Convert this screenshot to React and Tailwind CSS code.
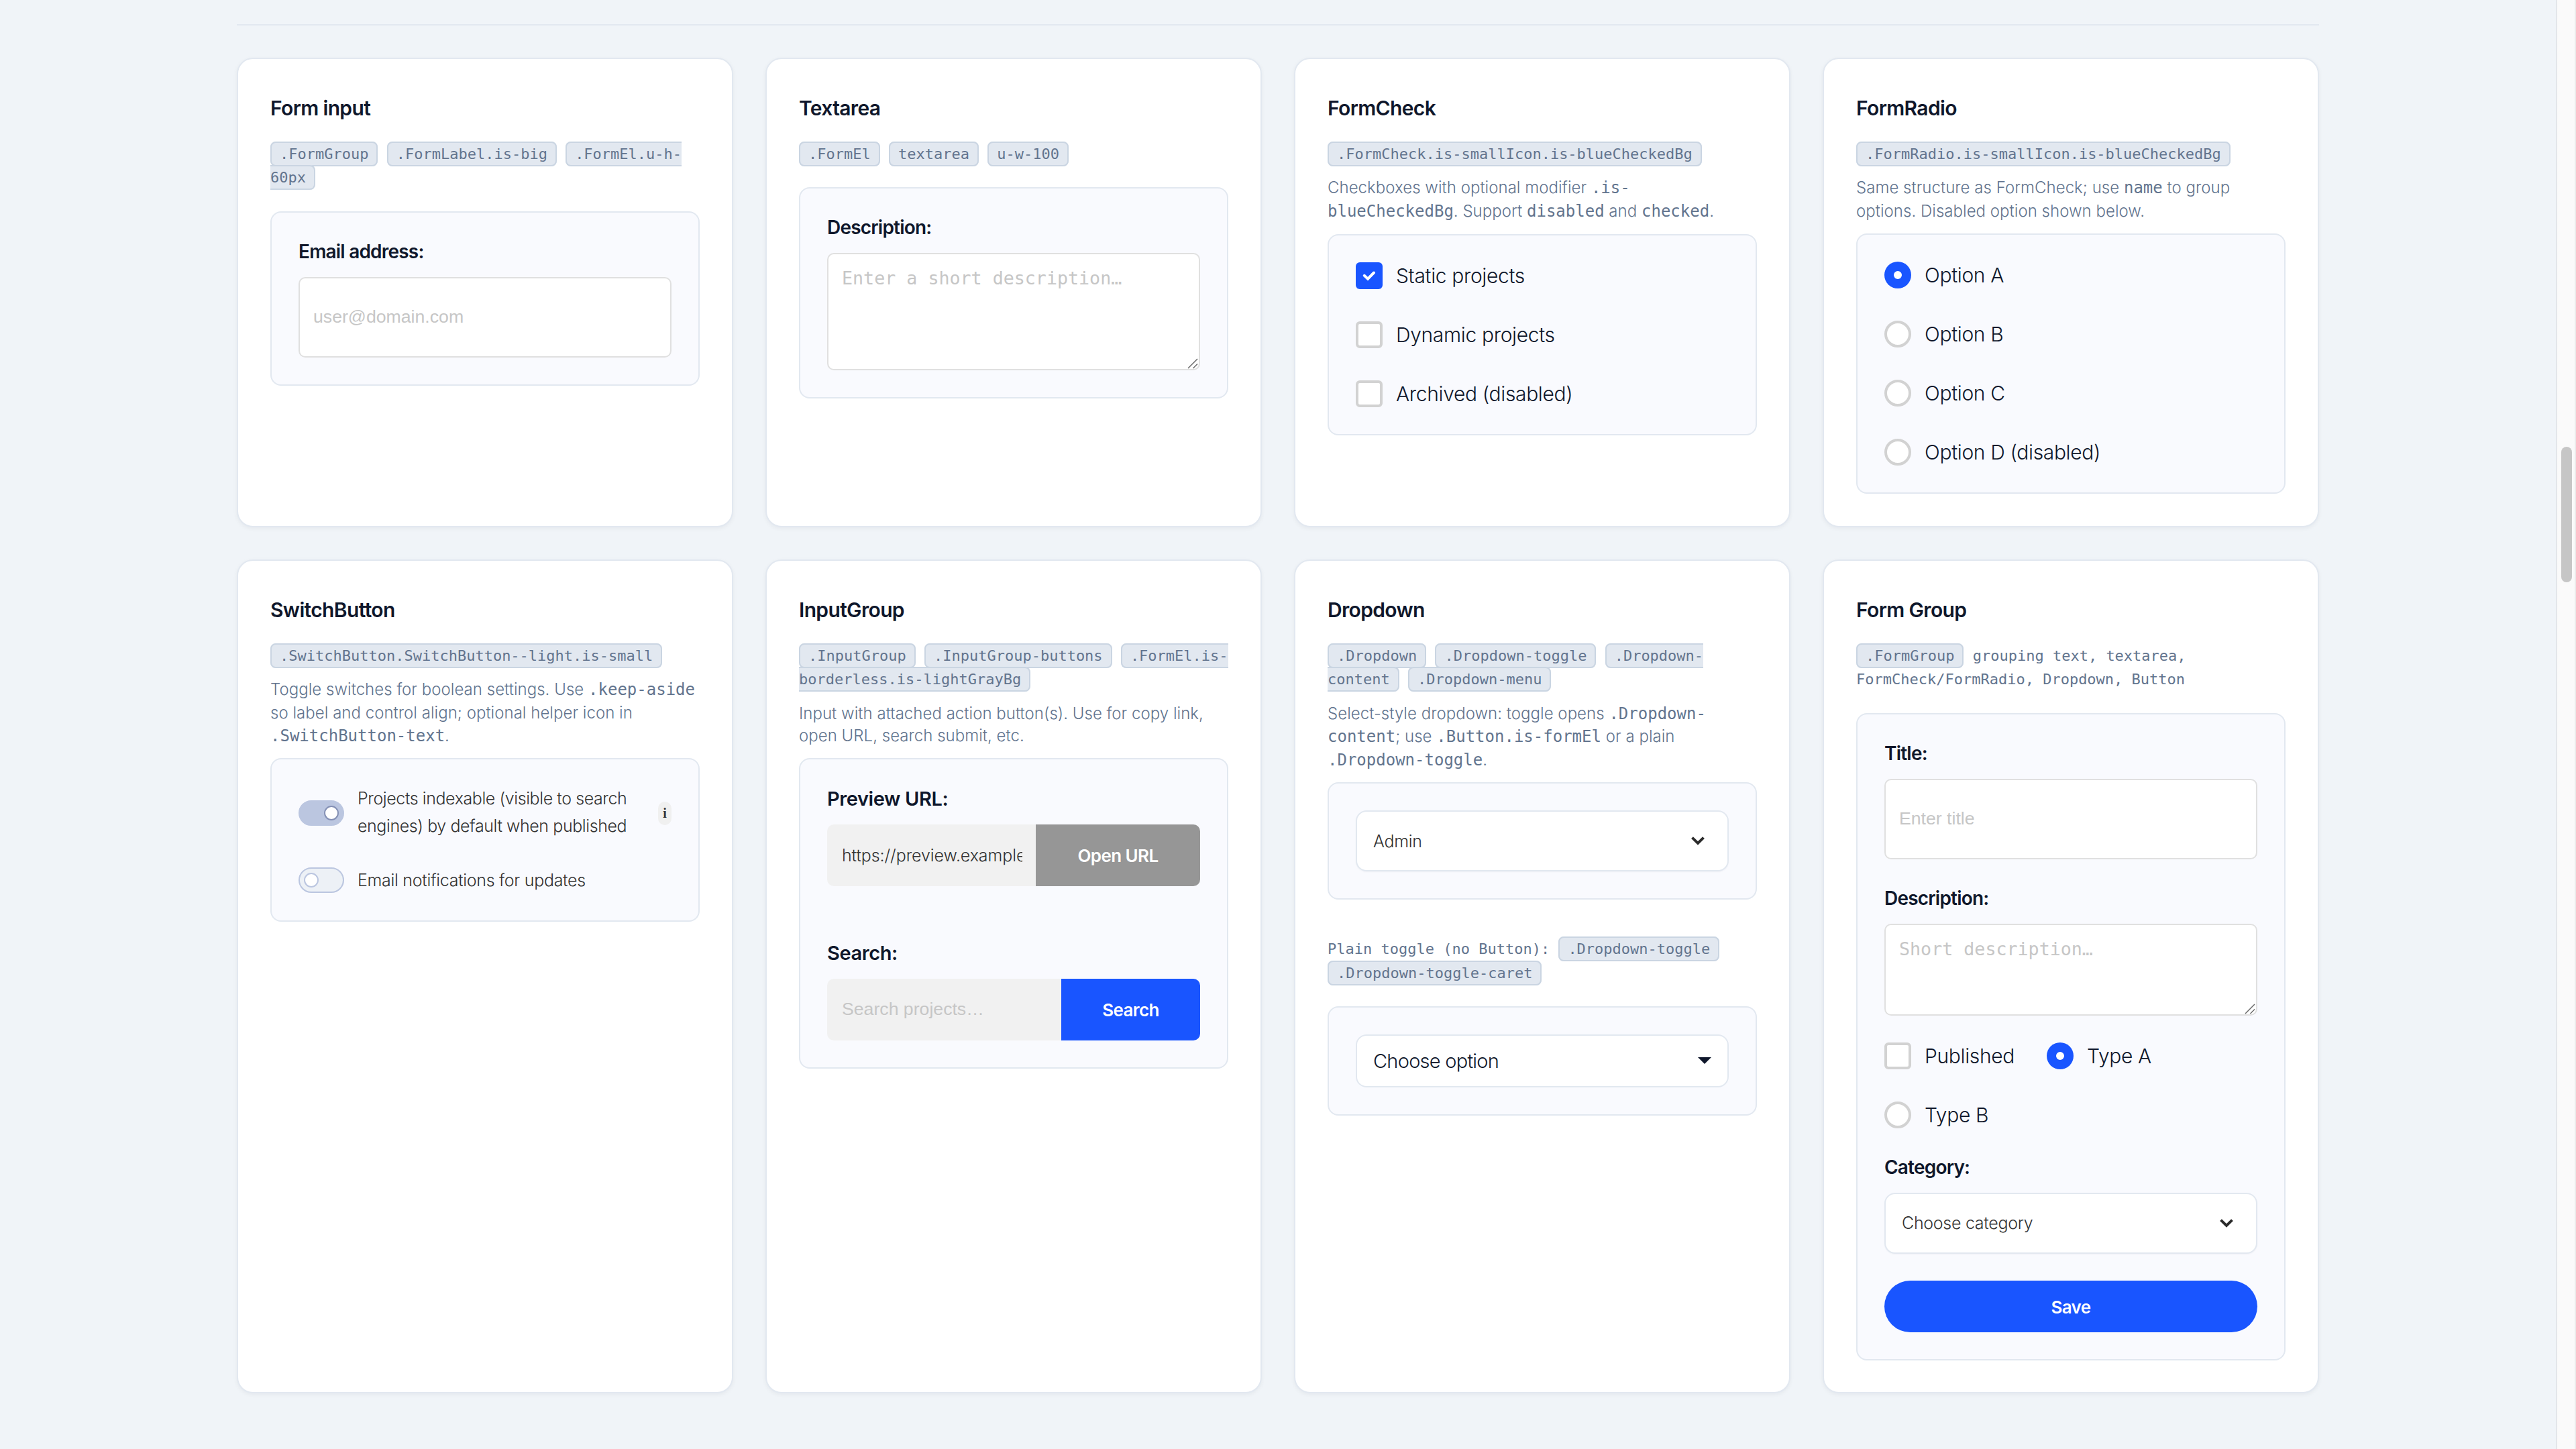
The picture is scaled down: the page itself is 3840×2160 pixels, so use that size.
import React, { useState } from 'react';

const Tag = ({ children }) => (
    <code className="font-['DejaVu_Sans_Mono',monospace] text-[22px] bg-slate-200 border-2 border-slate-300 rounded-lg px-3 py-1">
        {children}
    </code>
);

const Tags = ({ children, className = 'mb-8' }) => (
    <p className={`font-['DejaVu_Sans_Mono',monospace] text-[22px] leading-[35.2px] text-slate-500 ${className}`}>
        {children}
    </p>
);

const Mono = ({ children }) => (
    <code className="font-['DejaVu_Sans_Mono',monospace] text-2xl leading-[34.6px] tracking-normal">{children}</code>
);

const Note = ({ children }) => (
    <p className="text-2xl leading-[33.6px] tracking-[0.03px] font-light text-slate-500 mb-4">{children}</p>
);

const Card = ({ title, children }) => (
    <section className="bg-white border-2 border-slate-200 rounded-3xl p-12 shadow-[0_2px_6px_rgba(15,23,42,0.05)]">
        <h3 className="text-[30px] leading-[48px] tracking-[-0.65px] font-semibold pt-px mb-[27.2px]">{title}</h3>
        {children}
    </section>
);

const Demo = ({ children }) => (
    <div className="bg-[#f9fafe] border-2 border-slate-200 rounded-2xl p-10">{children}</div>
);

const Label = ({ children }) => (
    <label className="block h-14 text-[28px] leading-9 tracking-[-0.8px] font-semibold">{children}</label>
);

const GroupLabel = ({ children }) => (
    <label className="block h-[57px] text-[29px] leading-[38px] tracking-[-0.4px] font-semibold">{children}</label>
);

const TextInput = ({ placeholder }) => (
    <input
        type="text"
        placeholder={placeholder}
        className="block w-full h-[120px] bg-white border-2 border-[#e0e0e0] rounded-[10px] px-5 pb-px font-['Liberation_Sans',sans-serif] text-[26.67px] placeholder:text-[#c6c6c6]"
    />
);

const TextArea = ({ placeholder, height }) => (
    <div className="relative">
        <textarea
            placeholder={placeholder}
            className={`block w-full ${height} bg-white border-2 border-[#e0e0e0] rounded-[10px] p-5 resize-none font-['DejaVu_Sans_Mono',monospace] text-[26.67px] leading-[31px] placeholder:text-[#c6c6c6]`}
        />
        <svg className="absolute right-[3px] bottom-[2px] w-4 h-4" viewBox="0 0 16 16" stroke="#6b6b6b" strokeWidth="1.5">
            <path d="M1 15L15 1M8.5 15L15 8.5" />
        </svg>
    </div>
);

const Check = ({ label, checked }) => (
    <label className="flex items-center gap-5 h-10">
        {checked ? (
            <span className="w-10 h-10 rounded-md bg-[#1955ff]">
                <svg viewBox="0 0 40 40" fill="none" stroke="#fff" strokeWidth="4" strokeLinecap="round">
                    <path d="M12.8 19.8L18 24.6L27 15.5" />
                </svg>
            </span>
        ) : (
            <span className="w-10 h-10 rounded-md bg-white border-4 border-[#d2d2d2]" />
        )}
        <span className="text-[30px] leading-10 tracking-[-0.35px] font-light pt-px">{label}</span>
    </label>
);

const Radio = ({ label, checked }) => (
    <label className="flex items-center gap-5 h-10">
        {checked ? (
            <span className="w-10 h-10 rounded-full bg-[#1955ff] flex items-center justify-center">
                <span className="w-3 h-3 rounded-full bg-white" />
            </span>
        ) : (
            <span className="w-10 h-10 rounded-full bg-white border-4 border-[#d2d2d2]" />
        )}
        <span className="text-[30px] leading-10 tracking-[-0.35px] font-light pt-px">{label}</span>
    </label>
);

const Switch = ({ on, onClick }) => (
    <button
        type="button"
        onClick={onClick}
        className={`shrink-0 flex items-center w-[68px] h-[38px] rounded-full border-2 border-[#bbc6e0] px-1.5 ${on ? 'bg-[#bbc6e0] justify-end' : 'bg-[#edf1f6] justify-start'}`}
    >
        <span className={`w-[22px] h-[22px] rounded-full bg-white border-2 ${on ? 'border-[#8591b5]' : 'border-[#bbc6e0]'}`} />
    </button>
);

const Select = ({ value }) => (
    <button type="button" className="flex items-center justify-between w-full h-[91px] bg-white border-2 border-slate-200 rounded-2xl pl-6 pr-[34px] shadow-[0_1px_2px_rgba(15,23,42,0.04)]">
        <span className="text-[25px] leading-8 tracking-[-0.3px] font-light text-[#333]">{value}</span>
        <svg className="w-5 h-[13px]" viewBox="0 0 20 13" fill="none" stroke="#2b2b2b" strokeWidth="4">
            <path d="M1.5 1.6L10 10L18.5 1.6" />
        </svg>
    </button>
);

const App = () => {
    const [indexable, setIndexable] = useState(true);
    const [notify, setNotify] = useState(false);

    return (
        <div className="flex w-full h-[2160px] overflow-hidden bg-[#f0f4f8] font-[Inter,sans-serif] text-slate-900">
            <main className="flex-1 pt-9 pl-[353px] pr-[353px]">
                <div className="h-0.5 bg-slate-200 mb-12" />
                <div className="grid grid-cols-4 grid-rows-[700px_1243px] gap-12">
                    <Card title="Form input">
                        <Tags>
                            <Tag>.FormGroup</Tag> <Tag>.FormLabel.is-big</Tag> <Tag>.FormEl.u-h-60px</Tag>
                        </Tags>
                        <Demo>
                            <Label>Email address:</Label>
                            <TextInput placeholder="user@domain.com" />
                        </Demo>
                    </Card>

                    <Card title="Textarea">
                        <Tags>
                            <Tag>.FormEl</Tag> <Tag>textarea</Tag> <Tag>u-w-100</Tag>
                        </Tags>
                        <Demo>
                            <Label>Description:</Label>
                            <TextArea placeholder="Enter a short description…" height="h-[175px]" />
                        </Demo>
                    </Card>

                    <Card title="FormCheck">
                        <Tags className="mb-4">
                            <Tag>.FormCheck.is-smallIcon.is-blueCheckedBg</Tag>
                        </Tags>
                        <Note>
                            Checkboxes with optional modifier <Mono>.is-blueCheckedBg</Mono>. Support <Mono>disabled</Mono> and <Mono>checked</Mono>.
                        </Note>
                        <Demo>
                            <div className="flex flex-col gap-12">
                                <Check label="Static projects" checked />
                                <Check label="Dynamic projects" />
                                <Check label="Archived (disabled)" />
                            </div>
                        </Demo>
                    </Card>

                    <Card title="FormRadio">
                        <Tags className="mb-4">
                            <Tag>.FormRadio.is-smallIcon.is-blueCheckedBg</Tag>
                        </Tags>
                        <Note>
                            Same structure as FormCheck; use <Mono>name</Mono> to group options. Disabled option shown below.
                        </Note>
                        <Demo>
                            <div className="flex flex-col gap-12">
                                <Radio label="Option A" checked />
                                <Radio label="Option B" />
                                <Radio label="Option C" />
                                <Radio label="Option D (disabled)" />
                            </div>
                        </Demo>
                    </Card>

                    <Card title="SwitchButton">
                        <Tags className="mb-4">
                            <Tag>.SwitchButton.SwitchButton--light.is-small</Tag>
                        </Tags>
                        <Note>
                            Toggle switches for boolean settings. Use <Mono>.keep-aside</Mono> so label and control align; optional helper icon in <Mono>.SwitchButton-text</Mono>.
                        </Note>
                        <Demo>
                            <div className="flex items-center gap-5 h-20 mb-10">
                                <Switch on={indexable} onClick={() => setIndexable(!indexable)} />
                                <span className="flex-1 text-[25px] leading-[41px] tracking-[-0.42px] font-light text-[#333] pb-0.5">
                                    Projects indexable (visible to search engines) by default when published
                                </span>
                                <span className="flex items-center justify-center w-5 h-[35px] rounded-full bg-[#f0f0f0] font-['Liberation_Serif',serif] font-bold text-xl text-[#333]">
                                    i
                                </span>
                            </div>
                            <div className="flex items-center gap-5 h-10">
                                <Switch on={notify} onClick={() => setNotify(!notify)} />
                                <span className="text-[25px] leading-[41px] tracking-[-0.3px] font-light text-[#333]">Email notifications for updates</span>
                            </div>
                        </Demo>
                    </Card>

                    <Card title="InputGroup">
                        <Tags className="mb-4">
                            <Tag>.InputGroup</Tag> <Tag>.InputGroup-buttons</Tag> <Tag>.FormEl.is-borderless.is-lightGrayBg</Tag>
                        </Tags>
                        <Note>Input with attached action button(s). Use for copy link, open URL, search submit, etc.</Note>
                        <Demo>
                            <GroupLabel>Preview URL:</GroupLabel>
                            <div className="flex h-[92px] rounded-[10px] overflow-hidden mb-[81px]">
                                <div className="flex-1 min-w-0 bg-[#f1f1f1] px-5 flex items-center">
                                    <input
                                        type="text"
                                        defaultValue="https://preview.example.com"
                                        className="w-full pl-0.5 pt-0.5 text-[25px] tracking-[-0.1px] font-light text-[#333]"
                                    />
                                </div>
                                <button type="button" className="w-[245px] pt-0.5 bg-[#969696] text-white text-[26px] tracking-[-0.6px] font-semibold">Open URL</button>
                            </div>
                            <GroupLabel>Search:</GroupLabel>
                            <div className="flex h-[92px] rounded-[10px] overflow-hidden">
                                <input
                                    type="text"
                                    placeholder="Search projects…"
                                    className="flex-1 min-w-0 bg-[#f1f1f1] px-[22px] font-['Liberation_Sans',sans-serif] text-[26.67px] placeholder:text-[#c6c6c6]"
                                />
                                <button type="button" className="w-[207px] pt-0.5 bg-[#1955ff] text-white text-[26px] tracking-[-0.6px] font-semibold">Search</button>
                            </div>
                        </Demo>
                    </Card>

                    <Card title="Dropdown">
                        <Tags className="mb-4">
                            <Tag>.Dropdown</Tag> <Tag>.Dropdown-toggle</Tag> <Tag>.Dropdown-content</Tag> <Tag>.Dropdown-menu</Tag>
                        </Tags>
                        <Note>
                            Select-style dropdown: toggle opens <Mono>.Dropdown-content</Mono>; use <Mono>.Button.is-formEl</Mono> or a plain <Mono>.Dropdown-toggle</Mono>.
                        </Note>
                        <Demo>
                            <Select value="Admin" />
                        </Demo>
                        <Tags className="mt-14 mb-8">
                            Plain toggle (no Button): <Tag>.Dropdown-toggle</Tag> <Tag>.Dropdown-toggle-caret</Tag>
                        </Tags>
                        <Demo>
                            <button type="button" className="flex items-center justify-between w-full h-[79px] bg-white border-2 border-slate-200 rounded-2xl pl-6 pr-6">
                                <span className="text-[29px] leading-9 tracking-[-0.75px] font-light pt-0.5">Choose option</span>
                                <svg className="w-5 h-2.5" viewBox="0 0 20 10" fill="currentColor">
                                    <path d="M0 0H20L10 10Z" />
                                </svg>
                            </button>
                        </Demo>
                    </Card>

                    <Card title="Form Group">
                        <Tags>
                            <Tag>.FormGroup</Tag> grouping text, textarea, FormCheck/FormRadio, Dropdown, Button
                        </Tags>
                        <Demo>
                            <Label>Title:</Label>
                            <TextInput placeholder="Enter title" />
                            <div className="mt-10">
                                <Label>Description:</Label>
                                <TextArea placeholder="Short description…" height="h-[137px]" />
                            </div>
                            <div className="flex flex-wrap gap-12 my-10">
                                <Check label="Published" />
                                <Radio label="Type A" checked />
                                <Radio label="Type B" />
                            </div>
                            <Label>Category:</Label>
                            <Select value="Choose category" />
                            <button type="button" className="block w-full h-[77px] pt-0.5 mt-10 rounded-full bg-[#1955ff] text-white text-[26px] tracking-[-0.6px] font-semibold">
                                Save
                            </button>
                        </Demo>
                    </Card>
                </div>
            </main>

            {/* scrollbar gutter */}
            <div className="w-[30px] h-full bg-[#fafafa] border-l-2 border-r-2 border-l-[#e3e6ea] border-r-[#ebebeb] pt-[666px] pl-1.5">
                <div className="w-4 h-[202px] rounded-full bg-[#c6c6c6]" />
            </div>
        </div>
    );
};

export default App;
